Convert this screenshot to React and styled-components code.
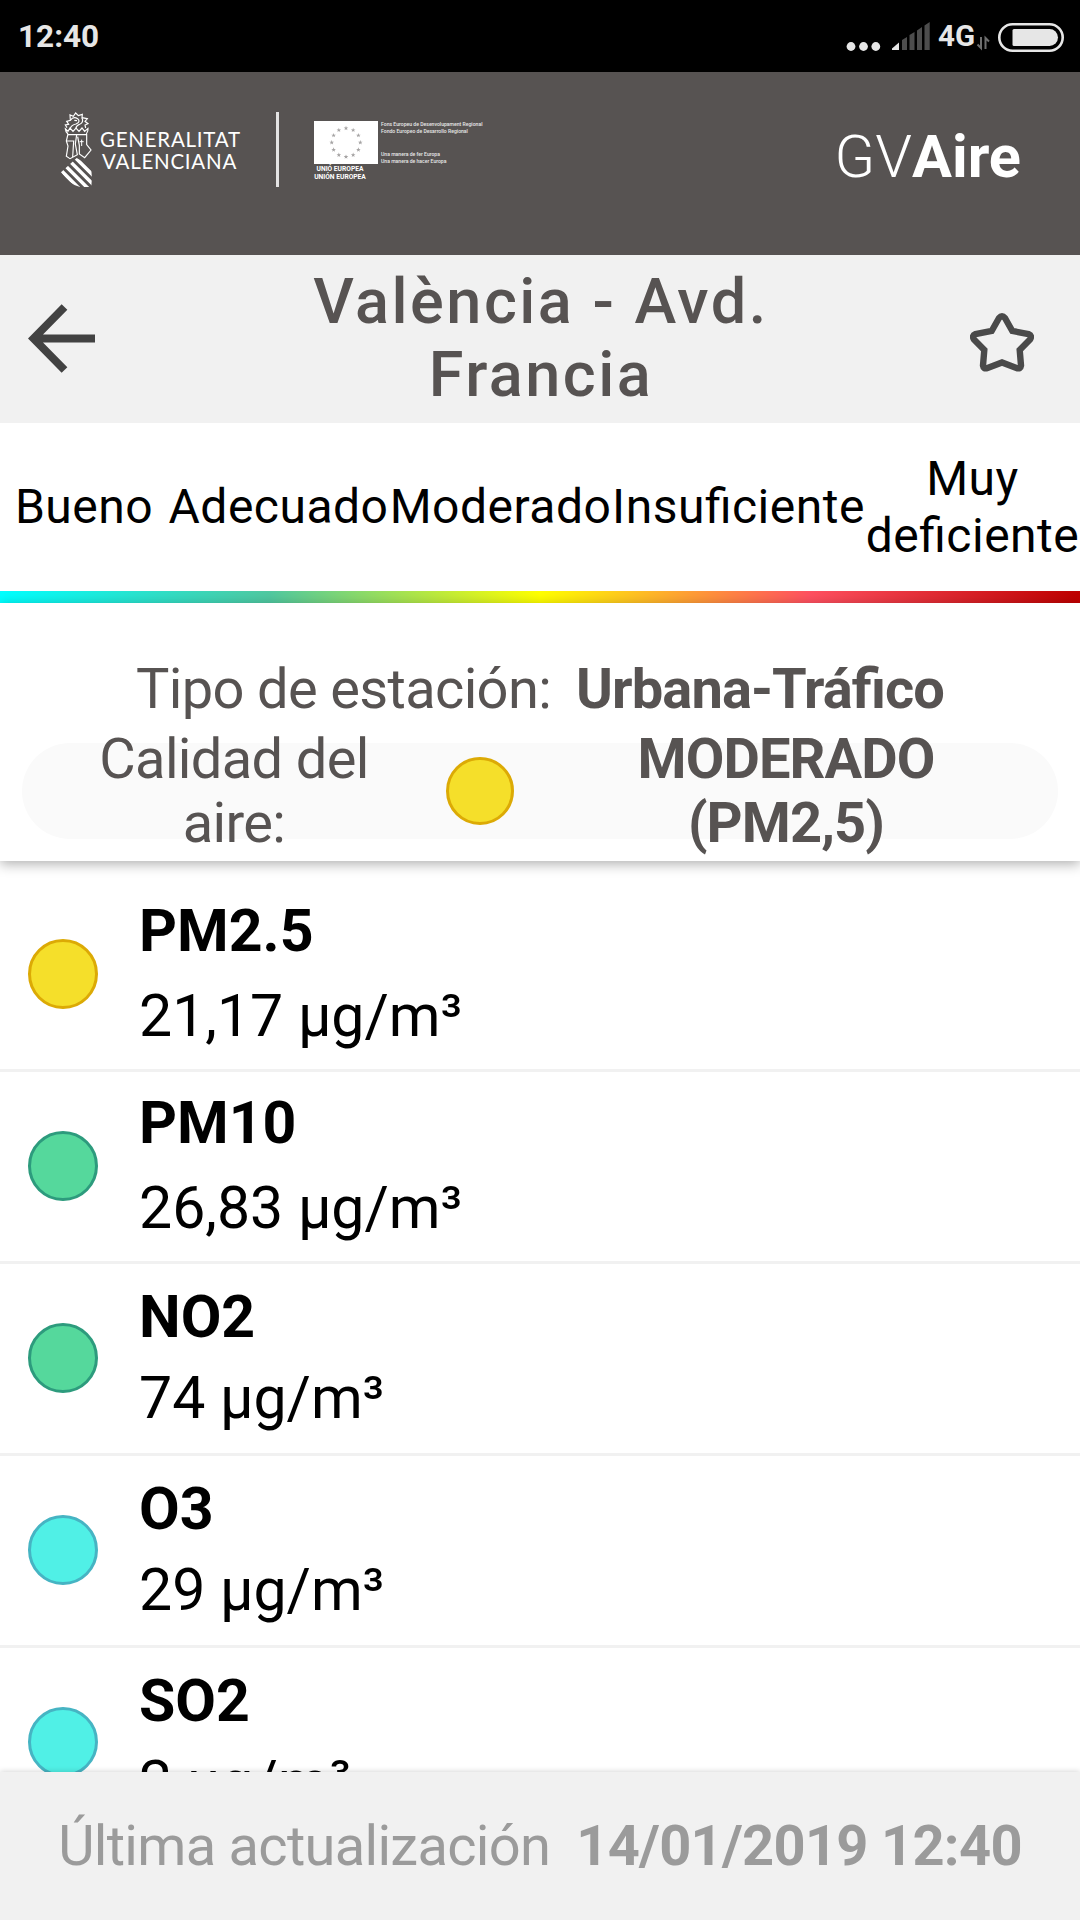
import React from "react";
import styled, { createGlobalStyle } from "styled-components";

const GlobalStyle = createGlobalStyle`
  * {
    box-sizing: border-box;
  }

  body {
    margin: 0;
    background: #ffffff;
    font-family: Roboto, "Liberation Sans", sans-serif;
  }
`;

const Screen = styled.div`
  width: 1080px;
  height: 1920px;
  display: flex;
  flex-direction: column;
  overflow: hidden;
  background: #ffffff;
`;

/* Status bar */
const StatusBar = styled.div`
  height: 72px;
  flex: none;
  display: flex;
  align-items: center;
  justify-content: space-between;
  padding: 2px 16px 0 18px;
  background: #000000;
  color: #e6e6e6;
  font-weight: 700;
`;

const Clock = styled.span`
  font-size: 31.5px;
  line-height: 36px;
`;

const StatusIcons = styled.div`
  display: flex;
  align-items: center;
`;

const Network = styled.span`
  font-size: 29.5px;
  line-height: 34px;
  margin: 0 1px 2px 8px;
`;

/* Header with logos */
const Header = styled.header`
  height: 183px;
  flex: none;
  display: flex;
  align-items: flex-start;
  background: #575352;
  color: #ffffff;
  padding: 38px 59px 0 60px;
`;

const Generalitat = styled.div`
  width: 216px;
  height: 78px;
  display: flex;
  gap: 6px;
`;

const GeneralitatName = styled.div`
  padding-top: 18px;
  font-family: Lato, sans-serif;
  font-size: 20.5px;
  line-height: 22px;
  letter-spacing: 0.75px;
  white-space: nowrap;

  span {
    display: block;
  }

  span + span {
    padding-left: 2px;
  }
`;

const Separator = styled.div`
  width: 3px;
  height: 75px;
  margin-top: 2px;
  background: #e4e3e3;
`;

const Europe = styled.div`
  display: flex;
  gap: 3px;
  margin: 11px 0 0 35px;
`;

const EuropeFlag = styled.div`
  width: 64px;
  font-size: 6.7px;
  font-weight: 700;
  line-height: 7.6px;
  white-space: nowrap;

  svg {
    display: block;
    margin-bottom: 2px;
  }

  span {
    display: block;
    width: 52px;
    text-align: center;
  }
`;

const Funds = styled.div`
  font-size: 5.1px;
  font-weight: 500;
  line-height: 6.6px;
  white-space: nowrap;
  color: #e8e8e8;

  p {
    margin: 0 0 17px;
  }
`;

const Brand = styled.h1`
  margin: 12px 0 0 auto;
  font-size: 59.5px;
  line-height: 70px;
  font-weight: 300;

  b {
    font-weight: 700;
  }
`;

/* Station title */
const TitleBar = styled.div`
  height: 168px;
  flex: none;
  display: flex;
  align-items: center;
  justify-content: space-between;
  padding: 0 46px 2px 28px;
  background: #f1f1f1;
`;

const StarIcon = styled.svg`
  margin-top: 8px;
`;

const Title = styled.h2`
  width: 560px;
  margin: 0 0 0 16px;
  font-size: 63px;
  line-height: 73px;
  font-weight: 500;
  letter-spacing: 2.5px;
  text-align: center;
  color: #575352;
`;

/* Quality scale */
const Scale = styled.div`
  height: 168px;
  flex: none;
  display: grid;
  grid-template-columns: 168px 221px 223px 253px 215px;
  align-items: center;
  padding-bottom: 1px;
  font-size: 48px;
  line-height: 57px;
  letter-spacing: 0.5px;
  font-feature-settings: "liga" 1;
  text-align: center;
  color: #000000;
`;

const ScaleBar = styled.div`
  height: 12px;
  flex: none;
  background: linear-gradient(90deg, #00ffff, #50c8a0 25%, #ffff00 50%, #ff5060 75%, #be0000);
`;

/* Station summary */
const Summary = styled.section`
  position: relative;
  z-index: 1;
  height: 258px;
  flex: none;
  padding: 54px 22px 0;
  background: #ffffff;
  box-shadow: 0 3px 12px rgba(0, 0, 0, 0.32);
  color: #575352;
  font-size: 56px;
  line-height: 64px;
  letter-spacing: -0.65px;
  font-feature-settings: "liga" 1;

  strong {
    font-weight: 700;
    letter-spacing: -0.9px;
  }
`;

const StationType = styled.div`
  display: flex;
  justify-content: center;
  gap: 25px;
  margin-bottom: 22px;
`;

/* the two-line texts are taller than the pill and spill over it evenly */
const Quality = styled.div`
  height: 96px;
  display: grid;
  grid-template-columns: 424px 68px 1fr;
  grid-template-rows: 96px;
  align-items: center;
  border-radius: 48px;
  background: #fafafa;
  text-align: center;
`;

const QualityLabel = styled.span`
  padding: 0 70px;
`;

const QualityValue = styled.strong`
  padding: 0 110px;
`;

const Dot = styled.span`
  display: block;
  flex: none;
  width: ${({ $size }) => $size}px;
  height: ${({ $size }) => $size}px;
  border-radius: 50%;
  border: 3px solid ${({ $level }) => levels[$level].border};
  background: ${({ $level }) => levels[$level].fill};
`;

/* Pollutants */
const List = styled.ul`
  flex: 1;
  min-height: 0;
  margin: 0;
  padding: 19px 0 0;
  overflow: hidden;
  list-style: none;
`;

const Item = styled.li`
  height: 192px;
  display: flex;
  align-items: center;
  gap: 41px;
  padding: 0 0 2px 28px;
  border-bottom: 3px solid #f1f1f1;
`;

const Reading = styled.div`
  display: flex;
  flex-direction: column;
  gap: ${({ $tight }) => ($tight ? 11 : 15)}px;
  font-size: 59px;
  line-height: 70px;
  color: #000000;
`;

const Footer = styled.footer`
  position: relative;
  z-index: 1;
  height: 148px;
  flex: none;
  display: flex;
  align-items: center;
  justify-content: center;
  gap: 26px;
  background: #f1f1f1;
  box-shadow: 0 0 6px rgba(0, 0, 0, 0.2);
  color: #9b9b9b;
  font-size: 56px;
  line-height: 64px;
  letter-spacing: -0.7px;
  white-space: nowrap;
`;

const levels = {
  good: { fill: "#50f0e6", border: "#46b4c3" },
  fair: { fill: "#55d89c", border: "#2d9b7d" },
  moderate: { fill: "#f5df2a", border: "#dcaa05" },
};

const scale = ["Bueno", "Adecuado", "Moderado", "Insuficiente", "Muy deficiente"];

const pollutants = [
  { name: "PM2.5", value: "21,17", level: "moderate" },
  { name: "PM10", value: "26,83", level: "fair" },
  { name: "NO2", value: "74", level: "fair", tight: true },
  { name: "O3", value: "29", level: "good", tight: true },
  { name: "SO2", value: "2", level: "good", tight: true },
];

const starPath = "M0 -2.4 L.6 -.7 L2.3 -.7 L.95 .35 L1.45 2 L0 1 L-1.45 2 L-.95 .35 L-2.3 -.7 L-.6 -.7Z";

function Emblem() {
  return (
    <svg width="34" height="78" viewBox="60 60 102 234" fill="none" stroke="#ffffff" strokeWidth="3.5">
      <clipPath id="shield">
        <path d="M63 247 L110 204 Q138 218 154 238 Q157 262 154 291 L120 291 Q88 285 63 247Z" />
      </clipPath>
      <path
        d="M50 228 L130 308 M64 215 L144 295 M78 202 L164 288 M92 189 L172 269"
        strokeWidth="10.5"
        clipPath="url(#shield)"
      />
      {/* helmet */}
      <path d="M84 132 L79 153 L84 168 L79 199 L90 206 L112 194 L106 162 L110 134" />
      <path d="M79 153 H101 L98 201 M84 134 H140 V164 L153 180 L134 203 L118 192 V166 L113 140" />
      <path d="M125 149 V168 M119 155 H131" strokeWidth="3" />
      {/* crown and dragon */}
      <path d="M84 132 Q76 124 76 116 L84 124 L90 114 L99 124 L108 114 L117 124 L126 114 L134 124 L144 115 Q145 124 139 132" />
      <path d="M81 113 L76 105 L86 103 L80 94 L91 91 L90 75 L100 79 L107 69 L115 77 L127 73 L126 83 L142 86 L135 94 L144 101 L135 105 L137 114" />
      <path d="M91 91 Q100 78 113 86 Q123 96 108 102 Q94 105 91 115 M103 91 L111 92 M126 83 Q132 97 119 103 Q109 107 108 114" />
    </svg>
  );
}

function Flag() {
  return (
    <svg width="64" height="43" viewBox="0 0 64 43">
      <rect width="64" height="43" fill="#ffffff" />
      {Array.from({ length: 12 }, (_, i) => {
        const a = (i * Math.PI) / 6;
        return (
          <path
            key={i}
            d={starPath}
            fill="#a5a3a3"
            transform={`translate(${32 + 14.3 * Math.sin(a)} ${21.5 - 14.3 * Math.cos(a)})`}
          />
        );
      })}
    </svg>
  );
}

export default function App() {
  return (
    <Screen>
      <GlobalStyle />
      <StatusBar>
        <Clock>12:40</Clock>
        <StatusIcons>
          <svg width="84" height="32" viewBox="846 20 84 32" fill="#e6e6e6">
            <circle cx="851" cy="45.5" r="4.4" />
            <circle cx="863.5" cy="45.5" r="4.4" />
            <circle cx="875.8" cy="45.5" r="4.4" />
            <path d="M892 49 V47.5 L899 41.5 V49Z" />
            <path
              fill="#4d4d4d"
              d="M902 49 V39 L907 36 V49Z M909.5 49 V34 L914.5 31 V49Z M917 49 V29.5 L922 26 V49Z M924.5 49 V24.5 L929.7 21 V49Z"
            />
          </svg>
          <Network>4G</Network>
          <svg width="22" height="32" viewBox="976 20 22 32" fill="none" stroke="#6e6e6e" strokeWidth="2">
            <path d="M981 36 V47 L977.5 43.5 M985.5 48 V37 L989 40.5" />
          </svg>
          <svg width="66" height="32" viewBox="998 20 66 32">
            <rect x="999.3" y="23.3" width="63.4" height="26.4" rx="13.2" fill="none" stroke="#e6e6e6" strokeWidth="2.6" />
            <path d="M1014 28 H1049.5 A8.5 8.5 0 0 1 1049.5 45 H1014 Q1012.5 45 1012.5 43.5 V29.5 Q1012.5 28 1014 28Z" fill="#e6e6e6" />
          </svg>
        </StatusIcons>
      </StatusBar>

      <Header>
        <Generalitat>
          <Emblem />
          <GeneralitatName>
            <span>GENERALITAT</span>
            <span>VALENCIANA</span>
          </GeneralitatName>
        </Generalitat>
        <Separator />
        <Europe>
          <EuropeFlag>
            <Flag />
            <span>UNIÓ EUROPEA</span>
            <span>UNIÓN EUROPEA</span>
          </EuropeFlag>
          <Funds>
            <p>
              Fons Europeu de Desenvolupament Regional
              <br />
              Fondo Europeo de Desarrollo Regional
            </p>
            <p>
              Una manera de fer Europa
              <br />
              Una manera de hacer Europa
            </p>
          </Funds>
        </Europe>
        <Brand>
          GV<b>Aire</b>
        </Brand>
      </Header>

      <TitleBar>
        <svg width="68" height="70" viewBox="0 0 68 70" fill="none" stroke="#424242" strokeWidth="8">
          <path d="M67 35.5 H6 M36.5 4 L5.5 35.5 L36.5 67" />
        </svg>
        <Title>València - Avd. Francia</Title>
        <StarIcon width="64" height="59" viewBox="0 0 64 59" fill="none" stroke="#4a4a4a" strokeWidth="6.4">
          <path d="M29 5 Q32 1.5 35 5 L42.3 18 L58.5 21 Q62.5 22.5 60 26.5 L49.7 37 L51 52.5 Q50.5 56.5 46.5 55 L32 49.5 L17.5 55 Q13.5 56.5 13 52.5 L14.3 37 L4 26.5 Q1.5 22.5 5.5 21 L21.7 18Z" />
        </StarIcon>
      </TitleBar>

      <Scale>
        {scale.map((label) => (
          <span key={label}>{label}</span>
        ))}
      </Scale>
      <ScaleBar />

      <Summary>
        <StationType>
          <span>Tipo de estación:</span>
          <strong>Urbana-Tráfico</strong>
        </StationType>
        <Quality>
          <QualityLabel>Calidad del aire:</QualityLabel>
          <Dot $size={68} $level="moderate" />
          <QualityValue>MODERADO (PM2,5)</QualityValue>
        </Quality>
      </Summary>

      <List>
        {pollutants.map((item) => (
          <Item key={item.name}>
            <Dot $size={70} $level={item.level} />
            <Reading $tight={item.tight}>
              <strong>{item.name}</strong>
              <span>{item.value} µg/m³</span>
            </Reading>
          </Item>
        ))}
      </List>

      <Footer>
        <span>Última actualización</span>
        <strong>14/01/2019 12:40</strong>
      </Footer>
    </Screen>
  );
}
